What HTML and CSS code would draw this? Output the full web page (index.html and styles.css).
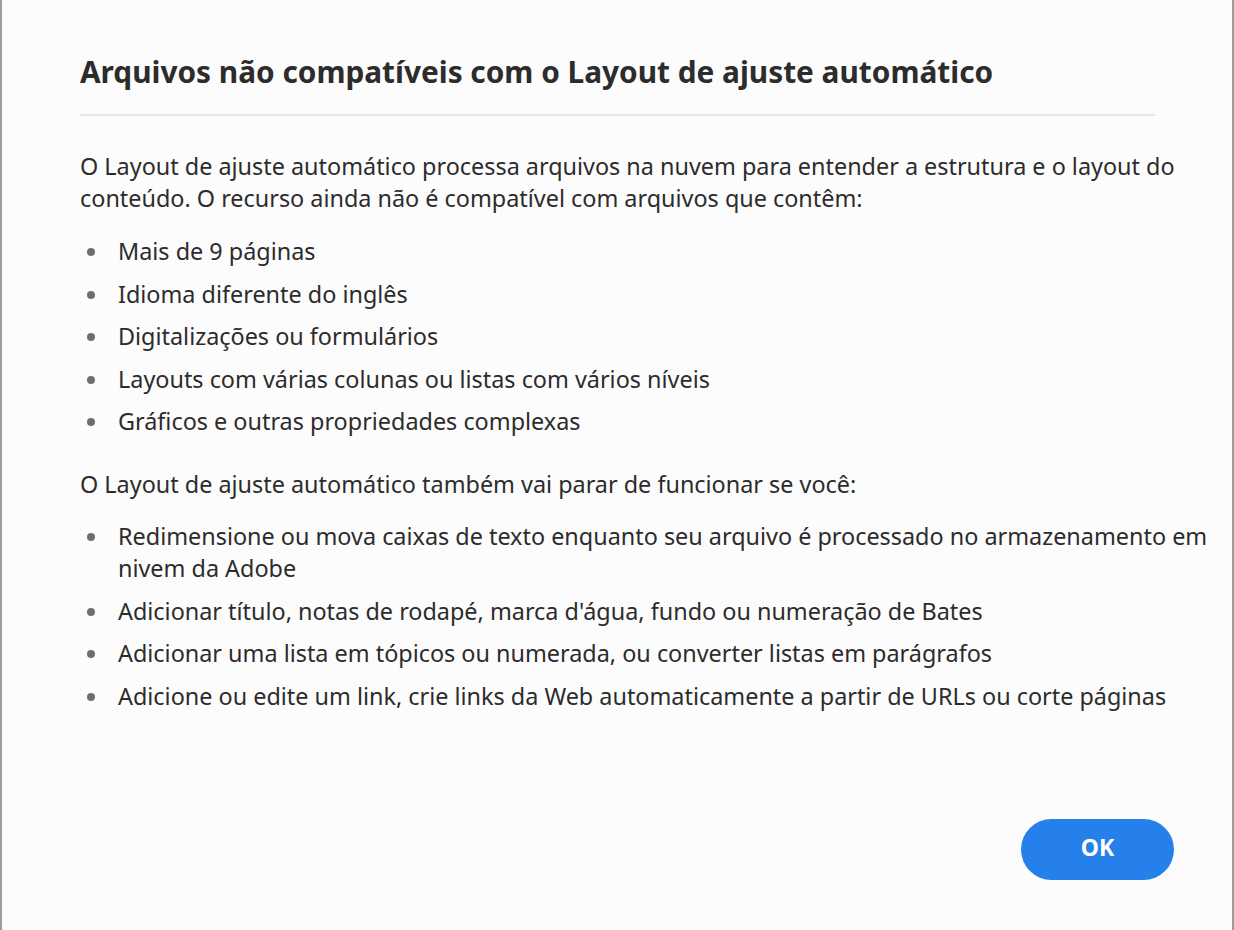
FILE: index.html
```html
<!DOCTYPE html>
<html lang="pt-BR">
<head>
<meta charset="utf-8">
<title>Layout de ajuste automático</title>
<link rel="stylesheet" href="styles.css">
</head>
<body>
<div class="dialog">
  <h1 class="title">Arquivos não compatíveis com o Layout de ajuste automático</h1>
  <hr class="divider">
  <div class="content">
    <p class="para">O Layout de ajuste automático processa arquivos na nuvem para entender a estrutura e o layout do conteúdo. O recurso ainda não é compatível com arquivos que contêm:</p>
    <ul class="list">
      <li>Mais de 9 páginas</li>
      <li>Idioma diferente do inglês</li>
      <li>Digitalizações ou formulários</li>
      <li>Layouts com várias colunas ou listas com vários níveis</li>
      <li>Gráficos e outras propriedades complexas</li>
    </ul>
    <p class="para">O Layout de ajuste automático também vai parar de funcionar se você:</p>
    <ul class="list list-actions">
      <li>Redimensione ou mova caixas de texto enquanto seu arquivo é processado no armazenamento em nivem da Adobe</li>
      <li>Adicionar título, notas de rodapé, marca d'água, fundo ou numeração de Bates</li>
      <li>Adicionar uma lista em tópicos ou numerada, ou converter listas em parágrafos</li>
      <li>Adicione ou edite um link, crie links da Web automaticamente a partir de URLs ou corte páginas</li>
    </ul>
  </div>
  <div class="footer">
    <button class="ok">OK</button>
  </div>
</div>
</body>
</html>
```
FILE: styles.css
```css
html, body {
  margin: 0;
  padding: 0;
  height: 100%;
  background: #fcfcfc;
}
.dialog {
  box-sizing: border-box;
  width: 1234px;
  height: 930px;
  border-left: 2px solid #9c9c9c;
  border-right: 2px solid #9c9c9c;
  padding: 52px 0 0 78px;
  display: flex;
  flex-direction: column;
  font-family: "Noto Sans", Lato, sans-serif;
  color: #2c2c2c;
}
.title {
  margin: 0;
  font-size: 29.8px;
  font-weight: 700;
  line-height: 40px;
  color: #2c2c2c;
}
.divider {
  margin: 22px 0 0 0;
  width: 1075px;
  border: 0;
  height: 2px;
  background: #e6e6e6;
}
.content {
  padding-top: 34px;
  font-size: 23.4px;
  line-height: 32px;
}
.para {
  margin: 0;
  width: 1120px;
}
.list {
  margin: 21px 0 31px 0;
  padding: 0 0 0 38px;
  list-style: none;
  width: 1110px;
}
.list-actions {
  margin-top: 20px;
}
.list li {
  position: relative;
  margin-bottom: 10.5px;
}
.list li::before {
  content: "";
  position: absolute;
  left: -31px;
  top: 13px;
  width: 8px;
  height: 8px;
  border-radius: 50%;
  background: #6e6e6e;
}
.footer {
  margin-top: auto;
  display: flex;
  justify-content: flex-end;
  padding: 0 58px 50px 0;
}
.ok {
  width: 153px;
  height: 61px;
  border: 0;
  border-radius: 31px;
  background: #2680eb;
  color: #fff;
  font-family: "Noto Sans", Lato, sans-serif;
  font-weight: 700;
  font-size: 23px;
  line-height: 1;
  padding: 0 0 4px 0;
  cursor: pointer;
}
```
